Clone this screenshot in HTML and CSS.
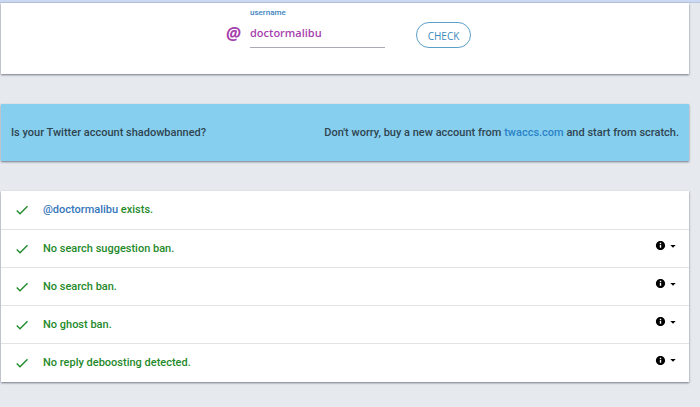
FILE: index.html
```
<!DOCTYPE html>
<html lang="en">
<head>
  <meta charset="UTF-8">
  <meta name="viewport" content="width=device-width, initial-scale=1.0">
  <title>Shadowban Test</title>
  <link rel="stylesheet" href="styles.css">
</head>
<body>
  <svg class="sprite" width="0" height="0" aria-hidden="true">
    <symbol id="check" viewBox="0 0 24 24">
      <path d="M9 16.17L4.83 12l-1.42 1.41L9 19 21 7l-1.41-1.41z"/>
    </symbol>
    <symbol id="info" viewBox="0 0 24 24">
      <path d="M12 2C6.48 2 2 6.48 2 12s4.480 10 10 10 10-4.480 10-10S17.520 2 12 2zm1.500 15h-3v-6h3v6zm0-8h-3V6h3v3z"/>
    </symbol>
    <symbol id="arrow" viewBox="0 0 24 24">
      <path d="M4 9l8 8 8-8z"/>
    </symbol>
  </svg>

  <header class="topbar"></header>

  <main>
    <form class="card search" onsubmit="return false">
      <span class="at">@</span>
      <div class="field">
        <label for="username">username</label>
        <input type="text" id="username" value="doctormalibu" spellcheck="false">
      </div>
      <button class="check-btn" type="submit">CHECK</button>
    </form>

    <section class="card banner">
      <span>Is your Twitter account shadowbanned?</span>
      <span>Don't worry, buy a new account from <a href="#">twaccs.com</a> and start from scratch.</span>
    </section>

    <ul class="card results">
      <li>
        <svg class="tick"><use href="#check"/></svg>
        <span><a href="#">@doctormalibu</a> exists.</span>
      </li>
      <li>
        <svg class="tick"><use href="#check"/></svg>
        <span>No search suggestion ban.</span>
        <button class="more" aria-label="Details"><svg class="info"><use href="#info"/></svg><svg class="arrow"><use href="#arrow"/></svg></button>
      </li>
      <li>
        <svg class="tick"><use href="#check"/></svg>
        <span>No search ban.</span>
        <button class="more" aria-label="Details"><svg class="info"><use href="#info"/></svg><svg class="arrow"><use href="#arrow"/></svg></button>
      </li>
      <li>
        <svg class="tick"><use href="#check"/></svg>
        <span>No ghost ban.</span>
        <button class="more" aria-label="Details"><svg class="info"><use href="#info"/></svg><svg class="arrow"><use href="#arrow"/></svg></button>
      </li>
      <li>
        <svg class="tick"><use href="#check"/></svg>
        <span>No reply deboosting detected.</span>
        <button class="more" aria-label="Details"><svg class="info"><use href="#info"/></svg><svg class="arrow"><use href="#arrow"/></svg></button>
      </li>
    </ul>
  </main>
</body>
</html>
```
FILE: styles.css
```
* {
  box-sizing: border-box;
}

body {
  margin: 0;
  background-color: #e6eaef;
  font-family: Roboto, sans-serif;
  font-size: 11px;
  font-weight: 500;
  line-height: 16px;
  color: #2f4550;
}

a {
  color: #2a83c6;
  text-decoration: none;
}

.sprite {
  display: none;
}

.topbar {
  height: 3px;
  background-color: #cbdaf2;
  border-bottom: 1px solid #b9c6df;
}

main {
  display: flex;
  flex-direction: column;
  gap: 30px;
  padding: 0 11px 20px 1px;
}

.card {
  margin: 0;
  background-color: #fff;
  box-shadow: 0 1px 2px rgba(40, 40, 60, 0.6);
}

.search {
  display: flex;
  justify-content: center;
  align-items: flex-start;
  height: 71px;
  padding: 4px 0 0 7px;
}

.at {
  width: 24px;
  margin-top: 17px;
  font-family: "Open Sans", sans-serif;
  font-size: 17px;
  font-style: italic;
  font-weight: 700;
  line-height: 20px;
  color: #a63fae;
}

.field {
  width: 135px;
  margin-right: 31px;
}

.field label {
  display: block;
  font-size: 8px;
  line-height: 12px;
  color: #3b83bd;
}

.field input {
  display: block;
  width: 100%;
  height: 29px;
  padding: 0 0 2px;
  border: 0;
  border-bottom: 1px solid #a9a9b8;
  background: none;
  outline: none;
  font-family: "Open Sans", sans-serif;
  font-size: 11px;
  font-weight: 600;
  color: #a63fae;
}

.check-btn {
  width: 55px;
  height: 26px;
  margin-top: 15px;
  padding: 1px 0 0;
  border: 1px solid #5b9fc9;
  border-radius: 13px;
  background: none;
  font-family: "Open Sans", sans-serif;
  font-size: 10px;
  color: #3b8abb;
}

.banner {
  display: flex;
  justify-content: space-between;
  align-items: center;
  height: 57px;
  padding: 0 10px;
  background-color: #87cfef;
}

.results {
  padding: 0;
  list-style: none;
  color: #1f8a2b;
}

.results li {
  display: flex;
  align-items: center;
  min-height: 38px;
  padding: 0 12px 0 13px;
  border-bottom: 1px solid #e2e3e6;
}

.results li:first-child {
  min-height: 39px;
}

.results li:last-child {
  border-bottom: 0;
}

.results a {
  color: #3576bb;
}

.tick {
  width: 16px;
  height: 16px;
  margin-right: 13px;
  fill: #1f8a2b;
}

.more {
  display: flex;
  align-items: center;
  gap: 3px;
  margin-left: auto;
  padding: 0 0 6px;
  border: 0;
  background: none;
}

.info {
  width: 11px;
  height: 11px;
}

.arrow {
  width: 8px;
  height: 8px;
}
```
